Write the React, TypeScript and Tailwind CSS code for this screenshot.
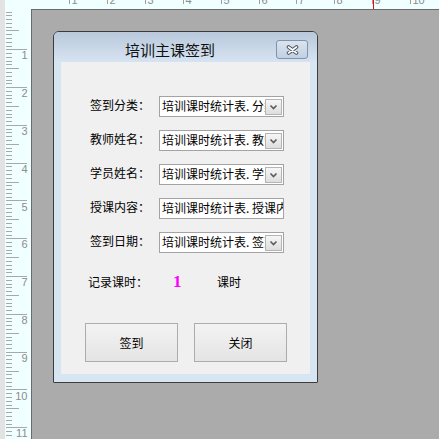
import React from "react";

function LeftRuler() {
  const o = 11.5;
  const cm = 37.8;
  const ticks: React.ReactElement[] = [];
  for (let k = 0; k <= 116; k++) {
    const y = Math.round(o + (k * cm) / 10) + 0.5;
    if (y > 439) break;
    const len = k === 0 ? 6 : k % 10 === 0 ? 21 : k % 5 === 0 ? 13 : 6;
    ticks.push(<line key={k} x1={6} x2={6 + len} y1={y} y2={y} stroke="#a8a8a8" strokeWidth={1} />);
  }
  const nums: React.ReactElement[] = [];
  for (let n = 1; n <= 11; n++) {
    const y = o + n * cm;
    nums.push(
      <text key={n} x={27.5} y={y + 10} textAnchor="end" fontSize={11} fill="#8c8c8c" fontFamily="Liberation Sans, sans-serif">
        {n}
      </text>
    );
  }
  return (
    <svg width={31} height={439} className="block shrink-0">
      <rect width={31} height={439} fill="#f0ffff" />
      <rect width={5} height={439} fill="#e3e3e3" />
      {ticks}
      {nums}
    </svg>
  );
}

function TopRuler() {
  const items: React.ReactElement[] = [];
  for (let n = 1; n <= 10; n++) {
    const x = Math.round(31.5 + n * 37.85 - 31) + 0.5;
    items.push(<line key={"l" + n} x1={x} x2={x} y1={0} y2={4} stroke="#a0a0a0" strokeWidth={1} />);
    items.push(
      <text key={"t" + n} x={x + 2} y={4} fontSize={11} fill="#8c8c8c" fontFamily="Liberation Sans, sans-serif">
        {n}
      </text>
    );
  }
  return (
    <svg width={408} height={9} className="block shrink-0">
      <rect width={408} height={9} fill="#f0ffff" />
      {items}
      <line x1={342.5} x2={342.5} y1={0} y2={9} stroke="#ff0000" strokeWidth={1} />
    </svg>
  );
}

function Chevron() {
  return (
    <svg width="9" height="6" viewBox="0 0 9 6">
      <path d="M1.5 1.5 L4.5 4.5 L7.5 1.5" fill="none" stroke="#5a5a5a" strokeWidth="1.6" />
    </svg>
  );
}

function Combo({ a, b, noButton }: { a: string; b: string; noButton?: boolean }) {
  return (
    <div className="w-[125px] h-[21px] border border-[#a3a3a3] bg-white flex items-start">
      <div className="flex-1 min-w-0 overflow-hidden whitespace-nowrap pl-[2px] leading-[17px]">
        {a}
        <span className="inline-block w-[6px]">.</span>
        {b}
      </div>
      {!noButton && (
        <div className="w-[17px] h-[16px] mt-[2px] mr-[1px] shrink-0 border border-[#b4b4b4] bg-linear-to-b from-[#f6f6f6] to-[#dedede] flex items-center justify-center">
          <Chevron />
        </div>
      )}
    </div>
  );
}

function Row({ label, b, noButton }: { label: string; b: string; noButton?: boolean }) {
  return (
    <div className="flex items-center h-[21px] pl-[29px]">
      <span className="w-[69px] leading-[16px] pb-[4px]">{label}</span>
      <Combo a="培训课时统计表" b={b} noButton={noButton} />
    </div>
  );
}

function Dialog() {
  return (
    <div className="w-[265px] h-[352px] rounded-t-[6px] rounded-b-[1px] border border-[#3c3c3c] bg-[#d7e4f2] flex flex-col overflow-hidden font-['Noto_Sans_CJK_SC',sans-serif]">
      <div className="h-[30px] shrink-0 flex items-start bg-linear-to-b from-[#b9c9db] to-[#d6e3f2]">
        <span className="ml-[71px] mt-[10px] text-[15px] leading-[16px] text-[#111]">培训主课签到</span>
        <div className="ml-auto mr-[9px] mt-[8px] w-[32px] h-[19px] rounded-[3px] border border-[#8193ab] bg-linear-to-b from-[#dae4ef] to-[#c2d0e1] flex items-center justify-center">
          <svg width="13" height="10" viewBox="0 0 13 10">
            <path d="M2.5 2 L10.5 8 M10.5 2 L2.5 8" stroke="#4b5563" strokeWidth="3.6" strokeLinecap="round" />
            <path d="M2.5 2 L10.5 8 M10.5 2 L2.5 8" stroke="#ffffff" strokeWidth="1.6" strokeLinecap="round" />
          </svg>
        </div>
      </div>
      <div className="mx-[7px] h-[312px] shrink-0 bg-[#f0f0f0] pt-[34px] flex flex-col text-[12px] text-black">
        <div className="flex flex-col gap-[13px]">
          <Row label="签到分类：" b="分类" />
          <Row label="教师姓名：" b="教师姓名" />
          <Row label="学员姓名：" b="学员姓名" />
          <Row label="授课内容：" b="授课内容" noButton />
          <Row label="签到日期：" b="签到日期" />
        </div>
        <div className="mt-[21px] h-[16px] flex items-center pl-[27px]">
          <span className="w-[85px] leading-[16px]">记录课时：</span>
          <span className="w-[44px] leading-[16px] text-[17px] font-bold text-[#ff00ff] font-['Liberation_Serif',serif]">1</span>
          <span className="leading-[16px]">课时</span>
        </div>
        <div className="mt-[33px] flex gap-[16px] pl-[24px]">
          <div className="w-[93px] h-[39px] border border-[#acacac] bg-linear-to-b from-[#f3f3f3] to-[#e4e4e4] flex items-center justify-center">
            签到
          </div>
          <div className="w-[93px] h-[39px] border border-[#acacac] bg-linear-to-b from-[#f3f3f3] to-[#e4e4e4] flex items-center justify-center">
            关闭
          </div>
        </div>
      </div>
    </div>
  );
}

export default function App() {
  return (
    <div className="w-[439px] h-[439px] overflow-hidden flex bg-[#ababab]">
      <LeftRuler />
      <div className="flex flex-col flex-1 min-w-0">
        <TopRuler />
        <div className="flex-1 border-l border-t border-[#6b6b6b] bg-[#ababab] pl-[21px] pt-[21px]">
          <Dialog />
        </div>
      </div>
    </div>
  );
}
